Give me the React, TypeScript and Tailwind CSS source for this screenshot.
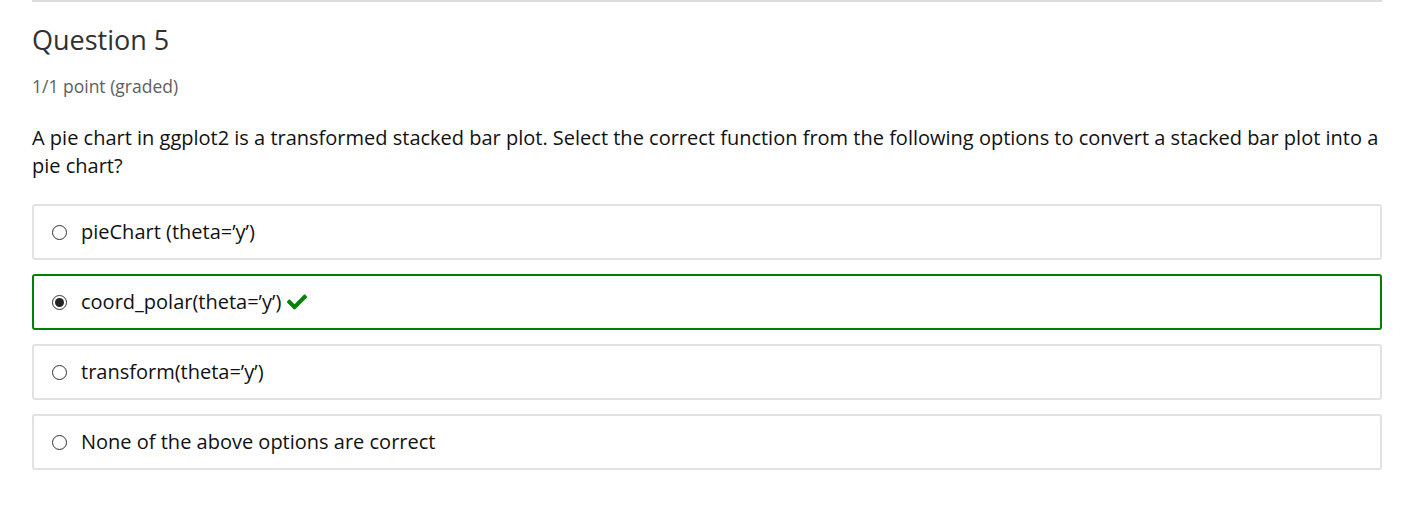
import React from 'react';

const options = [
    { id: 'a', label: 'pieChart (theta=’y’)', selected: false },
    { id: 'b', label: 'coord_polar(theta=’y’)', selected: true },
    { id: 'c', label: 'transform(theta=’y’)', selected: false },
    { id: 'd', label: 'None of the above options are correct', selected: false },
];

// font-awesome style check
const Check = () => (
    <svg width="20" height="20" viewBox="0 0 512 512" className="ml-[6px]">
        <path
            fill="#008100"
            d="M173.898 439.404l-166.4-166.4c-9.997-9.997-9.997-26.206 0-36.204l36.203-36.204c9.997-9.998 26.207-9.998 36.204 0L192 312.69 432.095 72.596c9.997-9.997 26.207-9.997 36.204 0l36.203 36.204c9.997 9.997 9.997 26.206 0 36.204l-294.4 294.401c-9.998 9.997-26.207 9.997-36.204-.001z"
        />
    </svg>
);

const Radio = ({ checked }: { checked: boolean }) => (
    <span className="w-[15px] h-[15px] rounded-full border border-[#333] bg-white flex items-center justify-center shrink-0">
        {checked && <span className="w-[9px] h-[9px] rounded-full bg-[#222]"></span>}
    </span>
);

export default function App() {
    return (
        <div className="w-[1410px] h-[508px] bg-white px-[32px] text-[#313131]" style={{ fontFamily: '"Open Sans", sans-serif' }}>
            <div className="w-[1350px] border-t-2 border-[#dddddd]"></div>
            <h3 className="text-[27px] leading-[36px] mt-[20px] text-[#313131]">Question 5</h3>
            <div className="text-[17.5px] leading-[24px] mt-[16px] text-[#5e5e5e]">1/1 point (graded)</div>
            <p className="text-[20px] leading-[28px] mt-[26px] w-[1350px] text-[#111]">
                A pie chart in ggplot2 is a transformed stacked bar plot. Select the correct function from the following options to convert a stacked bar plot into a pie chart?
            </p>
            <div className="flex flex-col gap-[14px] mt-[24px] w-[1350px]">
                {options.map((o) => (
                    <label
                        key={o.id}
                        className={`h-[56px] rounded-[3px] border-2 flex items-center pl-[18px] ${o.selected ? 'border-[#008100]' : 'border-[#e2e2e2]'}`}
                    >
                        <Radio checked={o.selected} />
                        <span className="ml-[14px] text-[20px] text-[#111]">{o.label}</span>
                        {o.selected && <Check />}
                    </label>
                ))}
            </div>
        </div>
    );
}
